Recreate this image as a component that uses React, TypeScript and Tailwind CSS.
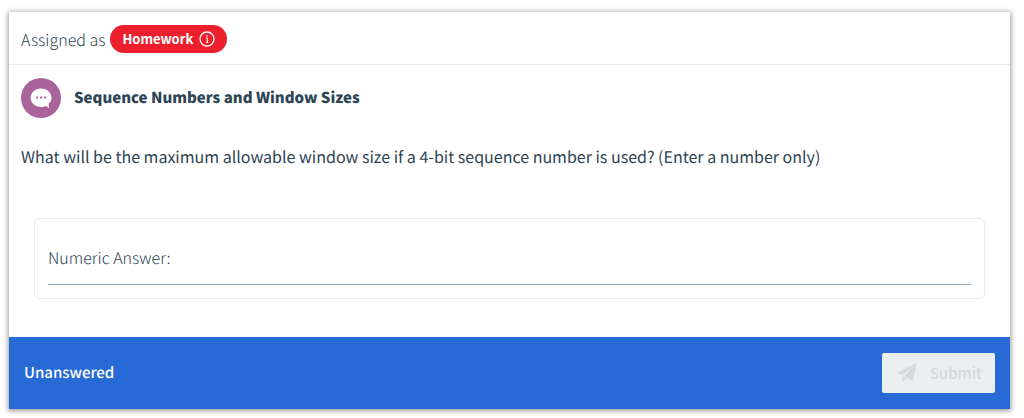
import React, {useState} from "react";

const PaperPlane = () => (
    <svg viewBox="0 0 19 20" className="w-5 h-5" fill="currentColor" aria-hidden="true">
        <path d="M19 0 0 9.600l5 2.200L15.600 4 6.800 13.300l8.600 4.700z"/>
        <path d="M5.200 13v6.500l3.300-4.500z"/>
    </svg>
);

const ChatBubble = () => (
    <svg viewBox="0 0 40 40" className="w-10 h-10 shrink-0" aria-hidden="true">
        <circle cx="20" cy="20" r="20" fill="#a9659b"/>
        <path
            d="M20 10.500c-5.800 0-10.300 4.100-10.300 9.300s4.500 9.200 10.300 9.200c1.900 0 3.600-.3 5.100-1l2.900 2.200-.3-4.500c1.700-1.500 2.800-3.600 2.800-5.900C30.500 14.600 25.800 10.500 20 10.500z"
            fill="#fff"
        />
        <g fill="#a9659b">
            <rect x="15" y="18.500" width="2.200" height="2" rx=".4"/>
            <rect x="19" y="18.500" width="2.200" height="2" rx=".4"/>
            <rect x="23" y="18.500" width="2.200" height="2" rx=".4"/>
        </g>
    </svg>
);

const InfoCircle = () => (
    <svg viewBox="0 0 16 16" className="w-4 h-4" fill="none" stroke="currentColor" aria-hidden="true">
        <circle cx="8" cy="8" r="7" strokeWidth="1.300"/>
        <path d="M7 6.900h1.300v4.400M7 11.300h2.300" strokeWidth="1"/>
        <circle cx="8" cy="4.800" r=".8" fill="currentColor" stroke="none"/>
    </svg>
);

export default function App() {
    const [answer, setAnswer] = useState("");

    const handleSubmit = (e: React.FormEvent) => {
        e.preventDefault();
    };

    return (
        <div className="bg-white pt-3 pb-2 pl-[9px] pr-3.5 font-['Noto_Sans_CJK_SC',sans-serif] text-base leading-6 text-[#2d4454] [text-rendering:geometricPrecision]">
            <form onSubmit={handleSubmit} className="bg-white shadow-[0_1px_5px_1px_rgba(0,0,0,0.4)]">
                <header className="flex items-center gap-[5px] px-3 pt-[13px] pb-[11px] border-b border-[#e8e9ea]">
                    <span className="font-light">Assigned as</span>
                    <button
                        type="button"
                        className="flex items-center gap-1.5 h-7 px-3 rounded-full bg-[#ed1f2d] text-white text-[13px] font-bold"
                    >
                        Homework <InfoCircle/>
                    </button>
                </header>
                <div className="px-3 pt-[13px] pb-[38px]">
                    <div className="flex items-center gap-[13px]">
                        <ChatBubble/>
                        <h1 className="text-[15px] font-black">Sequence Numbers and Window Sizes</h1>
                    </div>
                    <p className="mt-[26px]">
                        What will be the maximum allowable window size if a 4-bit sequence number is used? (Enter a number only)
                    </p>
                    <div className="mt-[50px] mx-[13px] px-[13px] pt-6 pb-[13px] border border-[#e8ebed] rounded-md">
                        <div className="flex items-center gap-2 h-[42px] pb-[13px] border-b border-[#95a8b7]">
                            <label htmlFor="answer" className="font-light">Numeric Answer:</label>
                            <input
                                id="answer"
                                type="text"
                                inputMode="numeric"
                                className="flex-1 min-w-0 bg-transparent focus:outline-none"
                                value={answer}
                                onChange={(e) => setAnswer(e.target.value)}
                            />
                        </div>
                    </div>
                </div>
                <footer className="flex items-center justify-between px-[15px] py-4 bg-[#276ad5] text-[15px] font-medium">
                    <span className="text-white">Unanswered</span>
                    <button
                        type="submit"
                        disabled
                        className="flex items-center gap-[13px] h-10 pl-[15px] pr-[13px] rounded-xs bg-[#eaeef1] text-[#d3d9dd]"
                    >
                        <PaperPlane/> Submit
                    </button>
                </footer>
            </form>
        </div>
    );
}
